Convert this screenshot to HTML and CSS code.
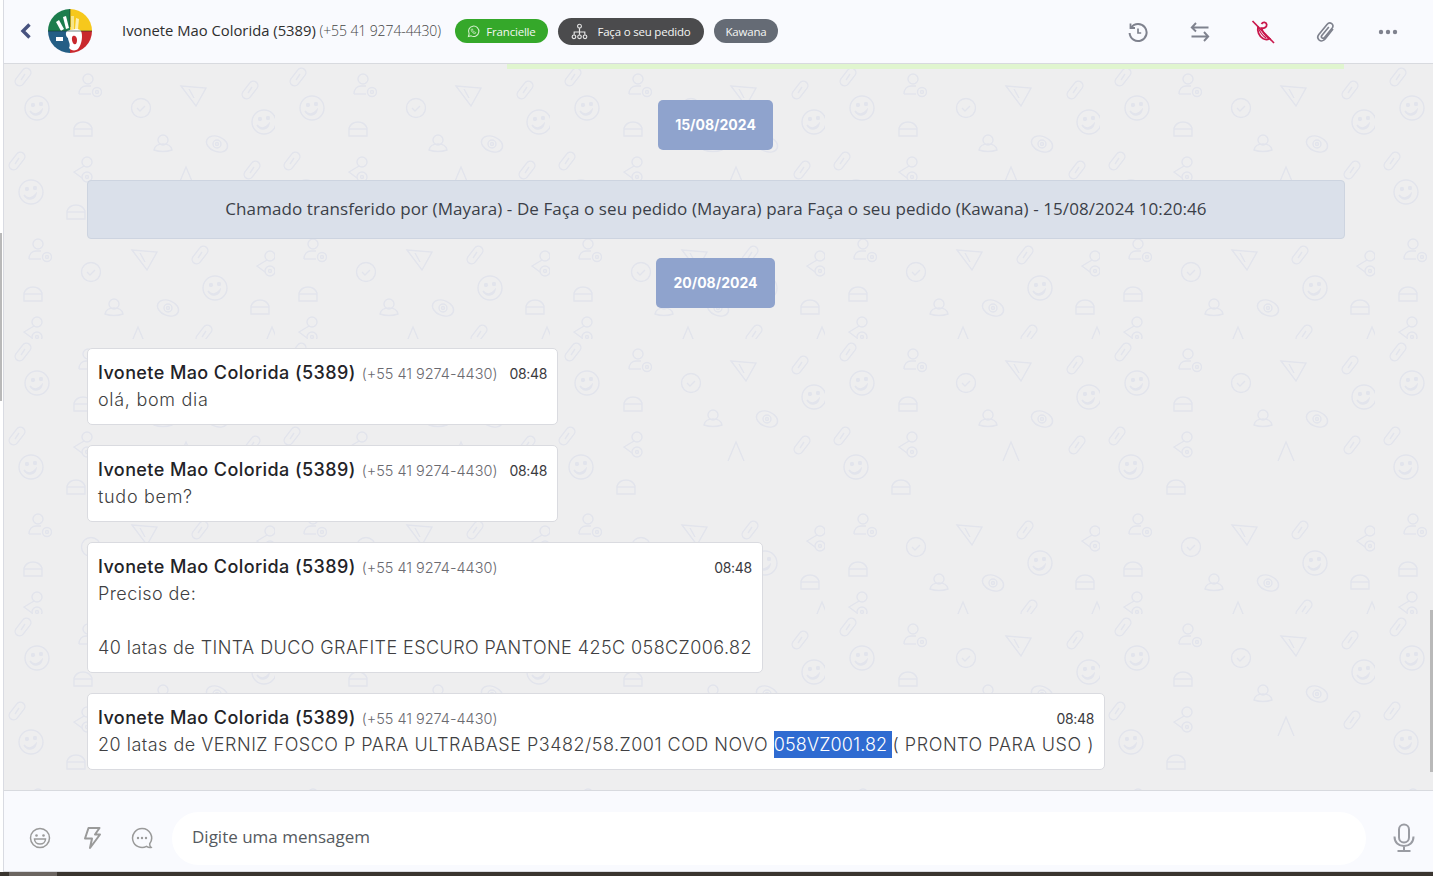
FILE: index.html
```html
<!DOCTYPE html>
<html lang="pt-BR">
<head>
<meta charset="utf-8">
<title>Chat</title>
<link rel="stylesheet" href="styles.css">
</head>
<body>
<div class="app">
  <header class="topbar">
    <button class="back" aria-label="Voltar">
      <svg width="14" height="18" viewBox="0 0 14 18"><path d="M10.500 2.500 4 9l6.500 6.500" fill="none" stroke="#47527f" stroke-width="3.400"/></svg>
    </button>
    <svg class="avatar" width="44" height="44" viewBox="0 0 44 44">
      <path d="M22 22V0A22 22 0 0 0 0 22Z" fill="#1c7d4d"/>
      <path d="M22 22V0A22 22 0 0 1 44 22Z" fill="#f6c81c"/>
      <path d="M22 22H0A22 22 0 0 0 22 44Z" fill="#245e85"/>
      <path d="M22 22H44A22 22 0 0 1 22 44Z" fill="#c9282d"/>
      <g fill="#fff">
        <path d="M8 13l3-2 5 9-3 2Z"/><path d="M15 8l3-1 3 12-3 1Z"/><path d="M23 7h3v13h-3Z" fill="#f7e58a"/><path d="M28 9l3 1-1 10h-3Z" fill="#fbeeb0"/>
        <path d="M8 28h7v4H8Z"/>
        <path d="M19 22c5-2 12-3 14 0 2 4 1 13-3 18-2 2-7 2-9-1 2-4-1-7-1-10-2-1-3-5-1-7Z"/>
      </g>
      <path d="M25 27c2-1 4 1 4 4s-1 5-3 4-3-7-1-8Z" fill="#c9282d"/>
      <path d="M0 22h44M22 0v18" stroke="#14352b" stroke-width=".6"/>
    </svg>
    <div class="contact"><span class="contact-name">Ivonete Mao Colorida (5389)</span> <span class="contact-phone">(+55 41 9274-4430)</span></div>
    <span class="chip chip-green">
      <svg width="13" height="13" viewBox="0 0 14 14" fill="none" stroke="#d8f0d2" stroke-width="1.100"><path d="M1.500 12.500l.8-3A5.600 5.600 0 1 1 4.500 11.700Z"/><path d="M5 4.300c-.8.700-.6 1.900.5 3.200s2.400 2 3.400 1.700l.6-1-1.300-.8-.6.500c-.7-.3-1.300-1-1.600-1.700l.5-.6-.7-1.400Z" stroke-width=".8"/></svg>
      Francielle
    </span>
    <span class="chip chip-dark">
      <svg width="17" height="17" viewBox="0 0 16 16" fill="none" stroke="#e6e6e6" stroke-width="1.100"><circle cx="8" cy="3" r="1.800"/><path d="M8 5v6M3 11V8.500h10V11"/><circle cx="2.800" cy="13" r="1.700"/><circle cx="8" cy="13" r="1.700"/><circle cx="13.200" cy="13" r="1.700"/></svg>
      Faça o seu pedido
    </span>
    <span class="chip chip-gray">Kawana</span>
    <nav class="actions">
      <button class="action" aria-label="Histórico">
        <svg width="22" height="22" viewBox="0 0 22 22" fill="none" stroke="#7f828e" stroke-width="2"><path d="M4.200 6.500A8.500 8.500 0 1 1 2.600 12"/><path d="M3.500 2.500v4.500h4.500" stroke-width="1.800"/><path d="M11 7.500V12h3.200" stroke-width="1.700"/></svg>
      </button>
      <button class="action" aria-label="Transferir">
        <svg width="22" height="22" viewBox="0 0 22 22" fill="none" stroke="#7f828e" stroke-width="1.900"><path d="M19.500 6.500H3M7 2 2.800 6.500 7 10.500"/><path d="M2.500 15.500H19M15 11l4.200 4.500L15 20"/></svg>
      </button>
      <button class="action" aria-label="Encerrar">
        <svg width="24" height="24" viewBox="0 0 24 24" fill="none" stroke="#c9174b" stroke-width="1.800"><path d="M7 7c-1 4 1 9 5 11.500 2 1.200 4.500 1.200 6.500.2-4-3-7-7-8-10.500 2 .3 5.500-.6 5.200-3.500C15.400 2 12 1.500 10.500 4"/><path d="M7 6c1 5 4 9 8 12" stroke-width="1.200"/><path d="M1.500 1 23 23" stroke-width="1.700"/></svg>
      </button>
      <button class="action" aria-label="Anexos">
        <svg width="19" height="20" viewBox="0 0 22 24" fill="none" stroke="#7f828e" stroke-width="2"><path d="M20 8.500 10.500 20.500c-1.900 2.300-5 2.700-7 1.200-2-1.600-2.200-4.400-.5-6.600L12.800 3c1.500-1.800 4-2.200 5.700-1 1.700 1.300 1.900 3.500.6 5.200L9.800 18.600c-.8 1-2.100 1.200-3 .5-.9-.7-.9-2-.2-3L15 6"/></svg>
      </button>
      <button class="action" aria-label="Mais">
        <svg width="20" height="6" viewBox="0 0 20 6" fill="#7f828e"><circle cx="3" cy="3" r="2.200"/><circle cx="10" cy="3" r="2.200"/><circle cx="17" cy="3" r="2.200"/></svg>
      </button>
    </nav>
  </header>

  <main class="chat">
    <div class="progress"></div>
    <div class="date date-first">15/08/2024</div>
    <div class="system">Chamado transferido por (Mayara) - De Faça o seu pedido (Mayara) para Faça o seu pedido (Kawana) - 15/08/2024 10:20:46</div>
    <div class="date date-second">20/08/2024</div>

    <article class="msg">
      <div class="msg-head"><span class="msg-name">Ivonete Mao Colorida (5389)</span><span class="msg-phone">(+55 41 9274-4430)</span><span class="msg-time">08:48</span></div>
      <div class="msg-body msg-body-short">olá, bom dia</div>
    </article>
    <article class="msg">
      <div class="msg-head"><span class="msg-name">Ivonete Mao Colorida (5389)</span><span class="msg-phone">(+55 41 9274-4430)</span><span class="msg-time">08:48</span></div>
      <div class="msg-body msg-body-short">tudo bem?</div>
    </article>
    <article class="msg">
      <div class="msg-head"><span class="msg-name">Ivonete Mao Colorida (5389)</span><span class="msg-phone">(+55 41 9274-4430)</span><span class="msg-time">08:48</span></div>
      <div class="msg-body">Preciso de:<br><br>40 latas de TINTA DUCO GRAFITE ESCURO PANTONE 425C 058CZ006.82</div>
    </article>
    <article class="msg">
      <div class="msg-head"><span class="msg-name">Ivonete Mao Colorida (5389)</span><span class="msg-phone">(+55 41 9274-4430)</span><span class="msg-time">08:48</span></div>
      <div class="msg-body msg-body-long">20 latas de VERNIZ FOSCO P PARA ULTRABASE P3482/58.Z001 COD NOVO <span class="selected">058VZ001.82 </span><span class="msg-tail">( PRONTO PARA USO )</span></div>
    </article>
  </main>

  <footer class="composer">
    <button class="tool" aria-label="Emoji">
      <svg width="22" height="22" viewBox="0 0 22 22" fill="none" stroke="#9a9a9a" stroke-width="1.500"><circle cx="11" cy="11" r="9.500"/><circle cx="7.500" cy="8.500" r="1.300" fill="#9a9a9a" stroke="none"/><circle cx="14.500" cy="8.500" r="1.300" fill="#9a9a9a" stroke="none"/><path d="M5.500 12h11c0 3-2.500 5-5.500 5s-5.500-2-5.500-5Z"/></svg>
    </button>
    <button class="tool tool-bolt" aria-label="Respostas rápidas">
      <svg width="20" height="24" viewBox="0 0 20 24" fill="none" stroke="#9a9a9a" stroke-width="2"><path d="M6.500 2h11l-4.500 6.500h5L8 22l2-9.500H3Z" stroke-linejoin="round"/></svg>
    </button>
    <button class="tool" aria-label="Mensagens">
      <svg width="22" height="22" viewBox="0 0 22 22" fill="none" stroke="#9a9a9a" stroke-width="1.500"><path d="M11 1.500a9.500 9.500 0 1 0 4.500 17.900c1.200.8 3 1.300 4.500 1-1-1-1.400-2.300-1.300-3.700A9.500 9.500 0 0 0 11 1.500Z"/><circle cx="7" cy="11" r="1.200" fill="#9a9a9a" stroke="none"/><circle cx="11" cy="11" r="1.200" fill="#9a9a9a" stroke="none"/><circle cx="15" cy="11" r="1.200" fill="#9a9a9a" stroke="none"/></svg>
    </button>
    <div class="input">Digite uma mensagem</div>
    <button class="mic" aria-label="Gravar áudio">
      <svg width="22" height="30" viewBox="0 0 22 30" fill="none" stroke="#9a9ca3" stroke-width="2"><rect x="6" y="1.500" width="10" height="18" rx="5"/><path d="M1.500 13.500c0 6 4 9.500 9.500 9.500s9.500-3.500 9.500-9.500M11 23v4.500M4.500 28h13"/></svg>
    </button>
  </footer>
  <div class="taskbar"></div>
</div>
<div class="thumb thumb-left"></div>
<div class="thumb thumb-right"></div>
</body>
</html>
```

FILE: styles.css
```css
* { box-sizing: border-box; }
html, body { height: 100%; margin: 0; overflow: hidden; background: #fff; }
button { background: none; border: 0; padding: 0; display: flex; align-items: center; justify-content: center; }

.app {
  height: 876px;
  display: flex;
  flex-direction: column;
  padding-left: 3px;
  font-family: "Open Sans", "Noto Sans", sans-serif;
}
.app > * { border-left: 1px solid #d9dbe2; }

.topbar {
  height: 64px;
  flex: none;
  display: flex;
  align-items: center;
  background: #f9fafe;
  border-bottom: 1px solid #d8dadf;
  padding: 0 0 1px 14px;
}
.back { width: 16px; height: 20px; }
.avatar { margin-left: 14px; flex: none; }
.contact { margin-left: 30px; padding-bottom: 3px; white-space: nowrap; font-size: 14px; color: #2c2c2c; }
.contact-name { font-size: 14.800px; font-weight: 500; color: #2e2e2e; }
.contact-phone { font-weight: 300; color: #444; letter-spacing: -.1px; }

.chip {
  display: flex;
  align-items: center;
  justify-content: center;
  height: 24px;
  border-radius: 12px;
  color: #f4f6f4;
  font-size: 11.500px;
  white-space: nowrap;
  letter-spacing: -.2px;
}
.chip-green { width: 93px; margin-left: 14px; background: #35a82a; gap: 6px; }
.chip-dark { width: 146px; height: 27px; border-radius: 14px; margin-left: 10px; background: #4b4b4d; gap: 9px; }
.chip-gray { width: 64px; margin-left: 10px; background: #656b75; }

.actions { margin-left: auto; margin-right: 14px; margin-top: 2px; display: flex; }
.action { width: 62.500px; height: 44px; }

.chat {
  flex: 1;
  min-height: 0;
  position: relative;
  overflow: hidden;
  padding: 36px 88px 0 83px;
  display: flex;
  flex-direction: column;
  align-items: flex-start;
  background-color: #eeeeef;
  background-position: -4px 0;
  background-size: 275px 275px;
  background-image: url("data:image/svg+xml,%3Csvg xmlns='http://www.w3.org/2000/svg' width='275' height='275' viewBox='0 0 275 275'%3E%3Cdefs%3E%3Cg id='c'%3E%3Crect x='-4.500' y='-10' width='9' height='20' rx='4.500' transform='rotate(38)'/%3E%3Cpath d='M2 -3 -2 3'/%3E%3C/g%3E%3Cg id='p'%3E%3Ccircle cx='-2' cy='-6' r='5'/%3E%3Cpath d='M-11 9c0-5 3-8 7-8h5'/%3E%3Cpath d='M-11 9H1'/%3E%3Ccircle cx='7' cy='7' r='4.500'/%3E%3Ccircle cx='7' cy='7' r='1.500'/%3E%3C/g%3E%3Cg id='s'%3E%3Ccircle r='12'/%3E%3Ccircle cx='-4' cy='-3' r='1.500' fill='%23e2e4ec'/%3E%3Ccircle cx='4' cy='-4' r='1.500' fill='%23e2e4ec'/%3E%3Cpath d='M-7 3c3 4 8 4 12-1-1 6-9 7-12 1Z' fill='%23e2e4ec'/%3E%3C/g%3E%3Cg id='k'%3E%3Ccircle r='9.500'/%3E%3Cpath d='M-4 0l3 3 5-5'/%3E%3C/g%3E%3Cg id='t'%3E%3Cpath d='M-12 -9 13 -7 3 11Z'/%3E%3Cpath d='M-4 -6 1 3'/%3E%3C/g%3E%3Cg id='u'%3E%3Cpath d='M-8 11 0 -8 8 11'/%3E%3C/g%3E%3Cg id='e'%3E%3Cpath d='M-9 7V-1c2-5 5-6 9-6s7 1 9 6V7Z'/%3E%3Cpath d='M-9 0H9'/%3E%3C/g%3E%3Cg id='h'%3E%3Ccircle cy='-3' r='5'/%3E%3Cpath d='M-9 7c1-5 4-6 9-6s8 1 9 6c-5 2-13 2-18 0Z'/%3E%3C/g%3E%3Cg id='y'%3E%3Cellipse rx='11' ry='7.500' transform='rotate(22)'/%3E%3Ccircle r='4'/%3E%3Ccircle r='1.500'/%3E%3C/g%3E%3Cg id='b'%3E%3Ccircle cx='2' cy='-8' r='5'/%3E%3Cpath d='M-1 -4-11 2l8 6'/%3E%3Ccircle cx='2' cy='7' r='5'/%3E%3Ccircle cx='2' cy='7' r='1.500'/%3E%3C/g%3E%3C/defs%3E%3Cg fill='none' stroke='%23e2e4ec' stroke-width='1.400'%3E%3Cuse href='%23c' x='23' y='13'/%3E%3Cuse href='%23p' x='90' y='21'/%3E%3Cuse href='%23s' x='37' y='44'/%3E%3Cuse href='%23t' x='193' y='31'/%3E%3Cuse href='%23k' x='141' y='44'/%3E%3Cuse href='%23c' x='250' y='26'/%3E%3Cuse href='%23s' x='264' y='58'/%3E%3Cuse href='%23e' x='83' y='65'/%3E%3Cuse href='%23h' x='163' y='79'/%3E%3Cuse href='%23y' x='217' y='80'/%3E%3Cuse href='%23c' x='17' y='97'/%3E%3Cuse href='%23b' x='85' y='106'/%3E%3Cuse href='%23u' x='186' y='111'/%3E%3Cuse href='%23c' x='252' y='106'/%3E%3Cuse href='%23s' x='31' y='128'/%3E%3Cuse href='%23e' x='76' y='148'/%3E%3Cuse href='%23p' x='40' y='186'/%3E%3Cuse href='%23t' x='144' y='195'/%3E%3Cuse href='%23c' x='200' y='191'/%3E%3Cuse href='%23b' x='268' y='200'/%3E%3Cuse href='%23k' x='91' y='208'/%3E%3Cuse href='%23s' x='215' y='224'/%3E%3Cuse href='%23e' x='33' y='230'/%3E%3Cuse href='%23h' x='114' y='243'/%3E%3Cuse href='%23y' x='168' y='244'/%3E%3Cuse href='%23e' x='260' y='243'/%3E%3Cuse href='%23b' x='35' y='266'/%3E%3Cuse href='%23u' x='138' y='271'/%3E%3Cuse href='%23c' x='204' y='270'/%3E%3Cuse href='%23u' x='272' y='271'/%3E%3C/g%3E%3C/svg%3E");
}

.progress { position: absolute; top: 0; left: 503px; width: 837px; height: 5px; background: #e0f5cf; }

.date {
  align-self: center;
  height: 50px;
  margin-right: 1px;
  padding-bottom: 2px;
  display: flex;
  align-items: center;
  justify-content: center;
  border-radius: 5px;
  background: #8fa3cd;
  color: #fff;
  font-family: Inter, sans-serif;
  font-weight: 700;
  font-size: 14px;
}
.date-first { width: 115px; }
.date-second { width: 119px; margin-top: 19px; }

.system {
  align-self: stretch;
  height: 59px;
  margin-top: 30px;
  padding-bottom: 2px;
  display: flex;
  align-items: center;
  justify-content: center;
  background: #dae0ea;
  border: 1px solid #cdd4e0;
  border-radius: 4px;
  font-size: 17px;
  letter-spacing: .08px;
  color: #3b3f48;
  white-space: nowrap;
}

.msg {
  min-width: 0;
  padding: 13px 10px 11px;
  margin-bottom: 20px;
  background: #fff;
  border: 1px solid #dadbe0;
  border-radius: 5px;
  font-family: Inter, sans-serif;
  color: #3f3f42;
}
.date-second + .msg { margin-top: 40px; }
.msg-head { display: flex; align-items: baseline; height: 24px; white-space: nowrap; }
.msg-name { font-size: 18px; font-weight: 500; color: #232327; letter-spacing: .41px; }
.msg-phone { font-size: 14.500px; font-weight: 300; color: #6a6a70; margin-left: 6px; margin-right: 12px; letter-spacing: -.02px; }
.msg-time { margin-left: auto; font-size: 14px; color: #3a3a3e; letter-spacing: -.3px; }
.msg-body { font-size: 18px; line-height: 27px; font-weight: 300; letter-spacing: .42px; white-space: nowrap; }
.msg-body-short { letter-spacing: .7px; }
.msg-body-long { letter-spacing: .49px; }
.msg-tail { letter-spacing: .55px; }
.selected { display: inline-block; background: #2f6bd1; color: #fff; white-space: pre; letter-spacing: .12px; }

.composer {
  height: 82px;
  flex: none;
  display: flex;
  align-items: center;
  background: #f9fafe;
  border-top: 1px solid #d8dadf;
  border-bottom: 1px solid #d8dadf;
  padding: 14px 0 0 0;
}
.tool { width: 50px; height: 30px; flex: none; }
.tool:first-child { margin-left: 11px; }
.tool-bolt { margin-left: 2px; }
.input {
  width: 1194px;
  height: 53px;
  margin-left: 5px;
  display: flex;
  align-items: center;
  padding-left: 20px;
  padding-bottom: 3px;
  background: #fff;
  border-radius: 27px;
  font-size: 17px;
  color: #555a60;
}
.mic { margin-left: 27px; width: 22px; }

.taskbar {
  height: 4px;
  flex: none;
  margin-left: -3px;
  border-left: 0 !important;
  background: linear-gradient(to right, #3a352f 9px, #6b6560 9px, #6b6560 57px, #3a352f 57px);
}
.thumb { position: fixed; background: #b9b9b9; }
.thumb-left { left: 0; top: 233px; width: 2px; height: 168px; }
.thumb-right { right: 0; top: 610px; width: 3px; height: 162px; }
```
